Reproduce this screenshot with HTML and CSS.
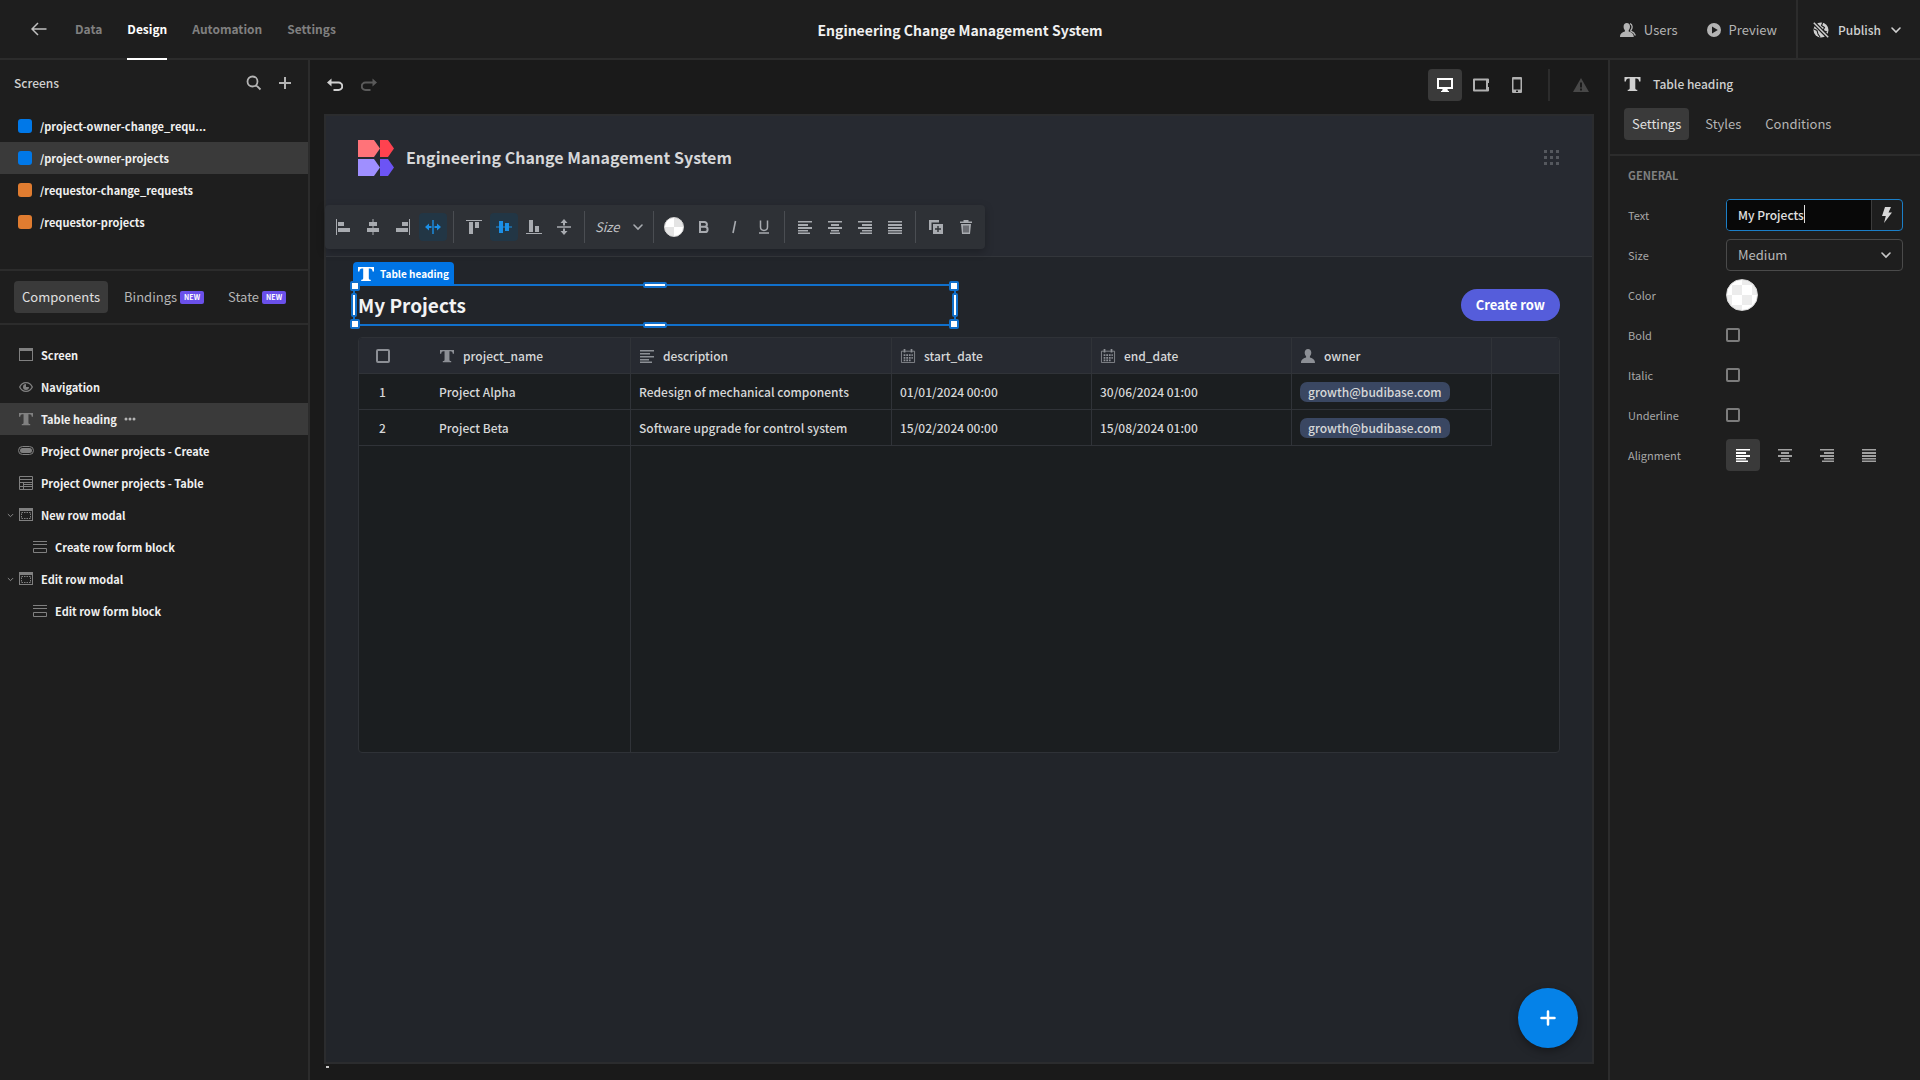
FILE: index.html
```html
<!DOCTYPE html>
<html lang="en">
<head>
  <meta charset="UTF-8" />
  <meta name="viewport" content="width=device-width, initial-scale=1" />
  <title>Engineering Change Management System</title>
  <link rel="stylesheet" href="styles.css">
</head>
<body>
  <svg class="sprite" aria-hidden="true">
    <symbol id="i-text" viewBox="0 0 16 16"><path d="M0 1h16v4.500h-1.400C14.300 3.400 13.600 2.600 12 2.600h-1.200V12c0 1.300.4 1.700 2 1.800V15H3.200v-1.200c1.600-.1 2-.5 2-1.800V2.600H4C2.400 2.600 1.700 3.400 1.400 5.500H0z"/></symbol>
    <symbol id="i-search" viewBox="0 0 16 16"><path d="M10.300 10.300 14.500 14.500M11.500 6.500a5 5 0 1 1-10 0 5 5 0 0 1 10 0z" fill="none" stroke="currentColor" stroke-width="1.800"/></symbol>
    <symbol id="i-plus" viewBox="0 0 14 14"><path d="M6 1h2v5h5v2H8v5H6V8H1V6h5z"/></symbol>
    <symbol id="i-chevron" viewBox="0 0 12 12"><path d="M2 4l4 4 4-4" fill="none" stroke="currentColor" stroke-width="1.600" stroke-linecap="round"/></symbol>
    <symbol id="i-undo" viewBox="0 0 16 14"><path d="M3 4.500h8.500a3.600 3.600 0 0 1 0 7.500H6.500" fill="none" stroke="currentColor" stroke-width="2"/><path d="M4.500 0.500v8L0 4.500z"/></symbol>
    <symbol id="i-window" viewBox="0 0 14 14"><path d="M0 0h14v13H0zM1 3v9h12V3z" fill-rule="evenodd"/></symbol>
    <symbol id="i-modal" viewBox="0 0 14 14"><path d="M0 0h14v13H0zM1 3v9h12V3z" fill-rule="evenodd"/><path d="M2.500 4.500h9v6h-9z" fill="none" stroke="currentColor" stroke-dasharray="1.500 1"/></symbol>
    <symbol id="i-eye" viewBox="0 0 14 14"><path d="M.7 7C2 4.200 4.200 2.700 7 2.700S12 4.200 13.300 7C12 9.800 9.800 11.300 7 11.300S2 9.800.7 7z" fill="none" stroke="currentColor" stroke-width="1.300"/><path d="M7 4v3h3a3 3 0 1 1-3-3z"/></symbol>
    <symbol id="i-button" viewBox="0 0 16 14"><rect x=".5" y="2.500" width="15" height="8" rx="4" fill="none" stroke="currentColor"/><rect x="2" y="4" width="12" height="5" rx="2.500"/></symbol>
    <symbol id="i-table" viewBox="0 0 14 14"><path d="M.5.5h13v13H.5zM.5 3.500h13M4.500 6v8M.5 6.500h13M4.500 8.500h9M.5 10.500h13" fill="none" stroke="currentColor"/></symbol>
    <symbol id="i-form" viewBox="0 0 14 14"><path d="M0 1.500h14M0 4.500h14M.5 8.500h13v4H.5z" fill="none" stroke="currentColor"/></symbol>
    <symbol id="i-al" viewBox="0 0 14 14"><path d="M0 1h14v1.500H0zM0 4h10v1.500H0zM0 7h14v1.500H0zM0 10h9v1.500H0zM0 12.500h12V14H0z"/></symbol>
    <symbol id="i-left" viewBox="0 0 14 14"><path d="M0 1h14v1.500H0zM0 4h10v2H0zM0 7h14v2H0zM0 10h10v1.500H0zM0 12.500h12V14H0z"/></symbol>
    <symbol id="i-center" viewBox="0 0 14 14"><path d="M0 1h14v1.500H0zM3 4h8v2H3zM0 7h14v2H0zM3 10h8v1.500H3zM2 12.500h10V14H2z"/></symbol>
    <symbol id="i-right" viewBox="0 0 14 14"><path d="M0 1h14v1.500H0zM4 4h10v2H4zM0 7h14v2H0zM4 10h10v1.500H4zM2 12.500h12V14H2z"/></symbol>
    <symbol id="i-just" viewBox="0 0 14 14"><path d="M0 1h14v1.500H0zM0 4h14v2H0zM0 7h14v2H0zM0 10h14v1.500H0zM0 12.500h14V14H0z"/></symbol>
    <symbol id="i-cal" viewBox="0 0 16 16"><path d="M.5 2.500h15v13H.5z" fill="none" stroke="currentColor"/><path d="M3 0h2v4H3zM11 0h2v4h-2zM3 6h2v2H3zM6 6h2v2H6zM9 6h2v2H9zM12 6h1.500v2H12zM3 9h2v2H3zM6 9h2v2H6zM9 9h2v2H9zM12 9h1.500v2H12zM3 12h2v2H3zM6 12h2v2H6zM9 12h2v2H9z"/></symbol>
    <symbol id="i-user" viewBox="0 0 14 14"><path d="M7 0c2 0 3.300 1.500 3.300 3.600 0 1.600-.6 2.900-1.400 3.700v1.300c2 .8 5.100 1.400 5.100 5.400H0c0-4 3.100-4.600 5.100-5.400V7.300C4.300 6.500 3.700 5.200 3.700 3.600 3.700 1.500 5 0 7 0z"/></symbol>
  </svg>

  <header class="topbar">
    <nav class="topnav">
      <a class="back" href="#" aria-label="Back"><svg width="16" height="14" viewBox="0 0 16 14"><path d="M15.500 7H1.500M7 1 1 7l6 6" fill="none" stroke="currentColor" stroke-width="1.500"/></svg></a>
      <a href="#">Data</a>
      <a class="active" href="#">Design</a>
      <a href="#">Automation</a>
      <a href="#">Settings</a>
    </nav>
    <h1>Engineering Change Management System</h1>
    <div class="actions">
      <button><svg width="16" height="14" viewBox="0 0 16 14"><path d="M6.800 0c2 0 3.200 1.500 3.200 3.500 0 1.600-.6 2.900-1.300 3.700v1.200c1.900.8 5.100 1.400 5.100 5.600H0c0-4.200 3-4.800 4.900-5.600V7.200C4.100 6.400 3.600 5.100 3.600 3.500 3.600 1.500 4.800 0 6.800 0z"/><path d="M10 .6c2.600.8 2.700 4.700.8 6.700v.8c1.700.6 3.600 1.600 4.600 4.400" fill="none" stroke="currentColor" stroke-width="1.300"/></svg>Users</button>
      <button class="preview"><svg width="14" height="14" viewBox="0 0 14 14"><path d="M7 0a7 7 0 1 1 0 14A7 7 0 0 1 7 0zM5 3.500v7L10.800 7z" fill-rule="evenodd"/></svg>Preview</button>
      <button class="publish"><svg width="16" height="16" viewBox="0 0 16 16"><circle cx="8" cy="8" r="7.500"/><path d="M10 0 8.500 3.500l3 2L10 8.500 14 10M1 7l3 1.500L5 12l2 3" fill="none" stroke="#1e1e1e" stroke-width="1.100"/><path d="M0 0 16 16" stroke="#1e1e1e" stroke-width="4"/><path d="M.8.800 15.200 15.200" stroke="currentColor" stroke-width="1.500"/></svg>Publish<svg width="12" height="12"><use href="#i-chevron"/></svg></button>
    </div>
  </header>

  <main class="workspace">
    <aside class="left-panel">
      <div class="panel-head">
        <h2>Screens</h2>
        <button aria-label="Search"><svg width="16" height="16"><use href="#i-search"/></svg></button>
        <button aria-label="Add screen"><svg width="14" height="14"><use href="#i-plus"/></svg></button>
      </div>
      <ul class="list screens">
        <li><span class="swatch blue"></span>/project-owner-change_requ&#46;&#46;&#46;</li>
        <li class="selected"><span class="swatch blue"></span>/project-owner-projects</li>
        <li><span class="swatch orange"></span>/requestor-change_requests</li>
        <li><span class="swatch orange"></span>/requestor-projects</li>
      </ul>
      <div class="tabs left-tabs">
        <button class="active">Components</button>
        <button>Bindings<span class="badge">NEW</span></button>
        <button>State<span class="badge">NEW</span></button>
      </div>
      <ul class="list components">
        <li><svg class="ico"><use href="#i-window"/></svg>Screen</li>
        <li><svg class="ico"><use href="#i-eye"/></svg>Navigation</li>
        <li class="selected"><svg class="ico"><use href="#i-text"/></svg>Table heading<button class="more" aria-label="More"><svg width="12" height="4" viewBox="0 0 12 4"><circle cx="2" cy="2" r="1.500"/><circle cx="6" cy="2" r="1.500"/><circle cx="10" cy="2" r="1.500"/></svg></button></li>
        <li><svg class="ico wide"><use href="#i-button"/></svg>Project Owner projects - Create</li>
        <li><svg class="ico"><use href="#i-table"/></svg>Project Owner projects - Table</li>
        <li class="open"><svg class="twisty"><use href="#i-chevron"/></svg><svg class="ico"><use href="#i-modal"/></svg>New row modal</li>
        <li class="child"><svg class="ico"><use href="#i-form"/></svg>Create row form block</li>
        <li class="open"><svg class="twisty"><use href="#i-chevron"/></svg><svg class="ico"><use href="#i-modal"/></svg>Edit row modal</li>
        <li class="child"><svg class="ico"><use href="#i-form"/></svg>Edit row form block</li>
      </ul>
    </aside>

    <section class="center">
      <div class="center-bar">
        <button class="history" aria-label="Undo"><svg width="16" height="14"><use href="#i-undo"/></svg></button>
        <button class="history redo" aria-label="Redo"><svg width="16" height="14"><use href="#i-undo"/></svg></button>
        <div class="devices">
          <button class="active" aria-label="Desktop"><svg width="16" height="16" viewBox="0 0 16 16"><path d="M0 1h16v11h-5.500c0 1.500.5 2 1.500 2v1H4v-1c1 0 1.500-.5 1.500-2H0zM2 3v7h12V3z" fill-rule="evenodd"/></svg></button>
          <button aria-label="Tablet"><svg width="16" height="14" viewBox="0 0 16 14"><path d="M1 .5h14a1 1 0 0 1 1 1V5h-1v4h1v3.500a1 1 0 0 1-1 1H1a1 1 0 0 1-1-1v-11a1 1 0 0 1 1-1zM2 2.500v9h11v-9z" fill-rule="evenodd"/></svg></button>
          <button aria-label="Mobile"><svg width="10" height="16" viewBox="0 0 10 16"><path d="M1 0h8a1 1 0 0 1 1 1v14a1 1 0 0 1-1 1H1a1 1 0 0 1-1-1V1a1 1 0 0 1 1-1zM1.500 2.500v10h7v-10zM4 13.500v1.500h2v-1.500z" fill-rule="evenodd"/></svg></button>
        </div>
        <svg class="warning" width="16" height="14" viewBox="0 0 16 14"><path d="M8 0l8 14H0zM7 4.500V9.500h2V4.500zM7 10.500v2h2v-2z" fill-rule="evenodd"/></svg>
      </div>

      <div class="frame">
        <div class="app-head">
          <svg width="36" height="36" viewBox="0 0 36 36"><path d="M0 0h16l6 8.500-6 8.500H0z" fill="#ff7379"/><path d="M22 0h8l6 8.500-6 8.500h-8z" fill="#ff424f"/><path d="M0 19h16l6 8.500-6 8.500H0z" fill="#9f8fff"/><path d="M22 19h8l6 8.500-6 8.500h-8z" fill="#6c54f5"/></svg>
          <h2>Engineering Change Management System</h2>
          <svg class="apps" width="16" height="16" viewBox="0 0 16 16"><path d="M0 0h3v3H0zM6 0h3v3H6zM12 0h3v3h-3zM0 6h3v3H0zM6 6h3v3H6zM12 6h3v3h-3zM0 12h3v3H0zM6 12h3v3H6zM12 12h3v3h-3z"/></svg>
        </div>

        <div class="toolbar">
          <button aria-label="Align left"><svg viewBox="0 0 16 16"><path d="M1 0h1v16H1zM3 3h6v4H3zM3 9h12v4H3z"/></svg></button>
          <button aria-label="Align center"><svg viewBox="0 0 16 16"><path d="M7.500 0h1v16h-1zM4 3h8v4H4zM2 9h12v4H2z"/></svg></button>
          <button aria-label="Align right"><svg viewBox="0 0 16 16"><path d="M14 0h1v16h-1zM7 3h6v4H7zM1 9h12v4H1z"/></svg></button>
          <button class="active" aria-label="Stretch horizontally"><svg viewBox="0 0 16 16"><path d="M7.300 1h1.400v14H7.300zM0 8l4-3.500V7h2.500v2H4v2.500zM16 8l-4-3.500V7H9.500v2H12v2.500z"/></svg></button>
          <hr>
          <button aria-label="Align top"><svg viewBox="0 0 16 16"><path d="M0 1h16v1H0zM3 3h4v12H3zM9 3h4v6H9z"/></svg></button>
          <button class="active" aria-label="Align middle"><svg viewBox="0 0 16 16"><path d="M0 7.500h16v1H0zM3 2h4v12H3zM9 4h4v8H9z"/></svg></button>
          <button aria-label="Align bottom"><svg viewBox="0 0 16 16"><path d="M0 14h16v1H0zM3 1h4v12H3zM9 7h4v6H9z"/></svg></button>
          <button aria-label="Stretch vertically"><svg viewBox="0 0 16 16"><path d="M1 7.300h14v1.400H1zM8 0l3.500 4H9v2.500H7V4H4.500zM8 16l3.500-4H9V9.500H7V12H4.500z"/></svg></button>
          <hr>
          <div class="size-pick">
            <select aria-label="Size"><option>Size</option></select>
            <svg width="12" height="12"><use href="#i-chevron"/></svg>
          </div>
          <hr>
          <button aria-label="Color"><span class="checker"></span></button>
          <button aria-label="Bold"><svg viewBox="0 0 16 16"><path d="M4 3h4.500a2.300 2.300 0 0 1 0 4.800H4zM4 7.800h5a2.600 2.600 0 0 1 0 5.200H4z" fill="none" stroke="currentColor" stroke-width="2"/></svg></button>
          <button aria-label="Italic"><svg viewBox="0 0 16 16"><path d="M9.500 2 7 14" stroke="currentColor" stroke-width="1.600"/></svg></button>
          <button aria-label="Underline"><svg viewBox="0 0 16 16"><path d="M4.500 1.500V8c0 4.500 7 4.500 7 0V1.500M3 14h10" fill="none" stroke="currentColor" stroke-width="1.500"/></svg></button>
          <hr>
          <button aria-label="Text left"><svg class="s14"><use href="#i-left"/></svg></button>
          <button aria-label="Text center"><svg class="s14"><use href="#i-center"/></svg></button>
          <button aria-label="Text right"><svg class="s14"><use href="#i-right"/></svg></button>
          <button aria-label="Justify"><svg class="s14"><use href="#i-just"/></svg></button>
          <hr>
          <button aria-label="Duplicate"><svg viewBox="0 0 16 16"><path d="M1 1h10v2.500H3.500V11H1zM5 5h10v10H5zM9.300 7v2.300H7v1.400h2.300V13h1.400v-2.300H13V9.300h-2.300V7z" fill-rule="evenodd"/></svg></button>
          <button aria-label="Delete"><svg viewBox="0 0 16 16"><path d="M5.500 1h5v1.500H14V4H2V2.500h3.500zM3 5h10l-1 10H4zM5.500 6.500v7h1v-7zM7.500 6.500v7h1v-7zM9.500 6.500v7h1v-7z" fill-rule="evenodd"/></svg></button>
        </div>

        <div class="app-body">
          <div class="title-row">
            <div class="heading">
              <h2>My Projects</h2>
              <div class="selection">
                <span class="tag"><svg width="16" height="16"><use href="#i-text"/></svg>Table heading</span>
                <i class="corner tl"></i><i class="corner tr"></i><i class="corner bl"></i><i class="corner br"></i>
                <i class="bar top"></i><i class="bar bottom"></i><i class="bar left"></i><i class="bar right"></i>
              </div>
            </div>
            <button class="create">Create row</button>
          </div>
          <div class="grid">
            <table>
              <colgroup><col class="c-num"><col class="c-std"><col class="c-desc"><col class="c-std"><col class="c-std"><col class="c-std"><col></colgroup>
              <thead>
                <tr>
                  <th class="num"><input type="checkbox" aria-label="Select all"></th>
                  <th><span><svg><use href="#i-text"/></svg>project_name</span></th>
                  <th><span><svg><use href="#i-al"/></svg>description</span></th>
                  <th><span><svg><use href="#i-cal"/></svg>start_date</span></th>
                  <th><span><svg><use href="#i-cal"/></svg>end_date</span></th>
                  <th><span><svg><use href="#i-user"/></svg>owner</span></th>
                  <th></th>
                </tr>
              </thead>
              <tbody>
                <tr><td class="num">1</td><td>Project Alpha</td><td>Redesign of mechanical components</td><td>01/01/2024 00:00</td><td>30/06/2024 01:00</td><td><span class="pill">growth@budibase.com</span></td><td class="blank"></td></tr>
                <tr><td class="num">2</td><td>Project Beta</td><td>Software upgrade for control system</td><td>15/02/2024 00:00</td><td>15/08/2024 01:00</td><td><span class="pill">growth@budibase.com</span></td><td class="blank"></td></tr>
                <tr class="rest"><td colspan="2"></td><td colspan="5" class="blank"></td></tr>
              </tbody>
            </table>
          </div>
        </div>
        <button class="fab" aria-label="Add component"><svg width="16" height="16" viewBox="0 0 16 16"><path d="M8 1.500v13M1.500 8h13" stroke="#fff" stroke-width="2.500" stroke-linecap="round"/></svg></button>
        <i class="speck"></i>
      </div>
    </section>

    <aside class="right-panel">
      <div class="right-head">
        <h2><svg width="17" height="16"><use href="#i-text"/></svg>Table heading</h2>
        <div class="tabs">
          <button class="active">Settings</button>
          <button>Styles</button>
          <button>Conditions</button>
        </div>
      </div>
      <form class="settings">
        <h3>GENERAL</h3>
        <div class="field">
          <label for="text">Text</label>
          <div class="text-box">
            <input type="text" id="text" value="My Projects">
            <i class="cursor"></i>
            <button type="button" aria-label="Bind"><svg width="10" height="16" viewBox="0 0 10 16"><path d="M3 0h6L6.500 5.500H10L2 16l1.800-7H0z"/></svg></button>
          </div>
        </div>
        <div class="field">
          <label for="size">Size</label>
          <div class="select-box">
            <select id="size"><option>Medium</option></select>
            <svg width="12" height="12"><use href="#i-chevron"/></svg>
          </div>
        </div>
        <div class="field">
          <label for="color">Color</label>
          <button type="button" id="color" class="color" aria-label="Color"><span class="checker"></span></button>
        </div>
        <div class="field"><label for="bold">Bold</label><input type="checkbox" id="bold"></div>
        <div class="field"><label for="italic">Italic</label><input type="checkbox" id="italic"></div>
        <div class="field"><label for="underline">Underline</label><input type="checkbox" id="underline"></div>
        <div class="field">
          <label for="align">Alignment</label>
          <div class="align">
            <button type="button" id="align" class="active" aria-label="Left"><svg><use href="#i-left"/></svg></button>
            <button type="button" aria-label="Center"><svg><use href="#i-center"/></svg></button>
            <button type="button" aria-label="Right"><svg><use href="#i-right"/></svg></button>
            <button type="button" aria-label="Justify"><svg><use href="#i-just"/></svg></button>
          </div>
        </div>
      </form>
    </aside>
  </main>
</body>
</html>
```
FILE: styles.css
```css
* { box-sizing: border-box; }
body {
  margin: 0; height: 100vh; display: flex; flex-direction: column; overflow: hidden;
  font-family: "Noto Sans CJK SC", "Noto Sans", sans-serif; font-size: 13px; line-height: 20px;
  background: #1e1e1e; color: #c8c8c8;
}
h1, h2, h3, ul { margin: 0; padding: 0; font-size: 12px; }
ul { list-style: none; }
a { color: inherit; text-decoration: none; }
svg { fill: currentColor; flex: none; display: block; }
button, input, select { font: inherit; color: inherit; }
button { display: flex; align-items: center; justify-content: center; padding: 0; border: none; background: none; cursor: pointer; }
select { appearance: none; border: none; background: none; }
.sprite { display: none; }
input[type="checkbox"] { appearance: none; width: 14px; height: 14px; margin: 0; border: 2px solid #7c7c7c; border-radius: 2px; }

/* top bar */
.topbar { display: grid; grid-template-columns: 1fr auto 1fr; height: 60px; border-bottom: 2px solid #2c2c2c; flex: none; }
.topnav { display: flex; gap: 25px; padding-left: 31px; color: #808080; font-size: 12px; font-weight: 600; }
.topnav a { display: flex; align-items: center; height: 60px; border-bottom: 2px solid transparent; }
.topnav .back { color: #c0c0c0; margin-right: 3px; }
.topnav .active { color: #fff; border-color: #fff; }
.topbar h1 { align-self: center; font-size: 14px; color: #f0f0f0; font-weight: 600; }
.actions { display: flex; justify-content: flex-end; }
.actions button { gap: 8px; color: #b4b4b4; }
.actions .preview { margin: 0 19px 0 29px; }
.actions .publish { gap: 9px; border-left: 2px solid #2c2c2c; padding: 0 18px 0 15px; color: #d0d0d0; font-size: 12px; font-weight: 500; }

/* layout */
.workspace { flex: 1; display: grid; grid-template-columns: 310px 1fr 312px; min-height: 0; }
.left-panel { border-right: 2px solid #2c2c2c; }
.right-panel { border-left: 2px solid #2c2c2c; }
.center { display: flex; flex-direction: column; background: #1a1a1a; padding: 0 14px 16px; min-width: 0; }

/* left panel */
.panel-head { display: flex; align-items: center; gap: 16px; height: 46px; padding: 0 16px 0 14px; color: #b4b4b4; }
.panel-head h2 { flex: 1; font-weight: 500; color: #d0d0d0; }
.list { font-size: 11px; font-weight: 600; color: #f0f0f0; }
.list li { display: flex; align-items: center; height: 32px; }
.list .selected { background: #3a3a3a; }
.screens { padding: 4px 0 31px; }
.screens li { gap: 8px; padding-left: 18px; }
.swatch { width: 14px; height: 14px; border-radius: 3px; }
.blue { background: #0078e8; }
.orange { background: #e07c30; }
.tabs { display: flex; gap: 8px; }
.tabs button { height: 32px; padding: 0 8px; border-radius: 4px; color: #b4b4b4; }
.tabs .active { background: #3a3a3a; color: #e0e0e0; }
.left-tabs { border: solid #2c2c2c; border-width: 2px 0; padding: 10px 14px; }
.badge { margin-left: 3px; padding: 0 4px; height: 13px; border-radius: 2px; background: #6a50ea; color: #fff; font-size: 7px; font-weight: 700; line-height: 13px; }
.components { padding-top: 14px; }
.components li { padding-left: 19px; }
.components .open { padding-left: 7px; }
.components .child { padding-left: 33px; }
.ico { width: 14px; height: 14px; margin-right: 8px; color: #808080; }
.wide { width: 16px; margin: 0 7px 0 -1px; }
.twisty { width: 7px; height: 7px; margin-right: 5px; color: #909090; }
.more { margin-left: 7px; color: #b4b4b4; }

/* center */
.center-bar { display: flex; align-items: center; height: 54px; padding: 0 5px 4px 3px; flex: none; }
.history { margin-right: 18px; color: #d0d0d0; }
.redo { color: #5a5a5a; transform: scaleX(-1); }
.devices { display: flex; gap: 2px; margin-left: auto; padding-right: 14px; border-right: 2px solid #2c2c2c; color: #b0b0b0; }
.devices button { width: 34px; height: 32px; border-radius: 4px; }
.devices .active { background: #3a3a3a; color: #fff; }
.warning { margin: 0 0 0 23px; color: #484848; }
.frame { position: relative; flex: 1; display: flex; flex-direction: column; border: 2px solid #2b2c2e; background: #22252a; }
.app-head { display: flex; align-items: flex-start; height: 141px; padding: 24px 32px; background: #272a31; border-bottom: 1px solid #33363b; }
.app-head h2 { flex: 1; margin-left: 12px; font-size: 16px; line-height: 34px; font-weight: 600; color: #d6d7d9; }
.apps { align-self: flex-start; margin: 10px 0; color: #55585e; }

.toolbar {
  position: absolute; left: -1px; top: 89px; display: flex; align-items: center; gap: 2px;
  height: 44px; padding: 0 5px 0 4px; border-radius: 4px; background: #2e3136; color: #a8abb0;
  box-shadow: 0 3px 8px rgba(0, 0, 0, 0.25);
}
.toolbar button { width: 28px; height: 28px; border-radius: 4px; }
.toolbar button svg { width: 16px; height: 16px; }
.toolbar button .s14 { width: 14px; height: 14px; }
.toolbar .active { background: #223645; color: #1b8fe6; }
.toolbar hr { width: 1px; height: 32px; margin: 0 4px; border: none; background: #4a4d52; }
.size-pick { position: relative; }
.size-pick select { width: 56px; padding: 0 4px; font-style: italic; color: #c0c2c5; }
.size-pick svg, .select-box svg { position: absolute; right: 3px; top: 4px; pointer-events: none; }
.checker {
  width: 20px; height: 20px; border-radius: 50%; border: 1px solid #d8d8d8;
  background: conic-gradient(#e4e4e4 25%, #fff 0 50%, #e4e4e4 0 75%, #fff 0);
}

.app-body { padding: 27px 32px; }
.title-row { display: flex; align-items: center; justify-content: space-between; height: 42px; }
.heading { position: relative; width: 598px; }
.heading h2 { font-size: 19px; line-height: 42px; font-weight: 600; color: #f2f3f4; }
.selection { position: absolute; inset: 0 0 0 -5px; border: 2px solid #1070cc; }
.tag {
  position: absolute; left: -2px; bottom: 38px; display: flex; align-items: center; gap: 6px; height: 24px; padding: 0 5px;
  border-radius: 4px 4px 0 0; background: #0074e4; color: #fff; font-size: 10px; font-weight: 700; white-space: nowrap;
}
.corner { position: absolute; width: 10px; height: 10px; background: #fff; border: 2px solid #1070cc; border-radius: 2px; }
.tl, .tr { top: -5px; }
.bl, .br { bottom: -5px; }
.tl, .bl { left: -5px; }
.tr, .br { right: -5px; }
.bar { position: absolute; background: #fff; border: 2px solid #1070cc; border-radius: 2px; }
.top, .bottom { width: 24px; height: 6px; left: calc(50% - 12px); }
.left, .right { width: 6px; height: 24px; top: calc(50% - 12px); }
.top { top: -4px; }
.bottom { bottom: -4px; }
.left { left: -4px; }
.right { right: -4px; }
.create { height: 32px; padding: 0 15px; border-radius: 16px; background: #555ddb; color: #fff; font-weight: 700; }

.grid { margin-top: 11px; border: 1px solid #2f3237; border-radius: 4px; overflow: hidden; background: #1b1e20; }
table { width: 100%; height: 414px; table-layout: fixed; border-collapse: separate; border-spacing: 0; font-size: 12px; }
.c-num { width: 72px; }
.c-std { width: 200px; }
.c-desc { width: 261px; }
th, td { height: 36px; padding: 0 8px; border: solid #303338; border-width: 0 1px 1px 0; text-align: left; font-weight: 500; color: #d6d7d8; white-space: nowrap; }
th { background: #272a31; }
th span { display: flex; align-items: center; gap: 8px; }
th svg { width: 16px; height: 14px; color: #8c8f95; }
th:last-child { border-right: none; }
.num { padding: 0 17px; border-right: none; }
td.num { padding-left: 20px; }
th.num input { display: block; border-color: #8c8f95; }
.blank { border: none; }
.rest td { height: auto; border-bottom: none; }
.pill { display: inline-block; height: 20px; padding: 0 8px; border-radius: 7px; background: #3a4762; }
.fab { position: absolute; right: 14px; bottom: 14px; width: 60px; height: 60px; border-radius: 50%; background: #0582e8; box-shadow: 0 3px 8px rgba(0, 0, 0, 0.35); }
.speck { position: absolute; left: 0; bottom: -6px; width: 3px; height: 2px; background: #c8c8c8; }

/* right panel */
.right-head { padding: 14px 14px; border-bottom: 2px solid #2c2c2c; }
.right-head h2 { display: flex; align-items: center; gap: 12px; margin-bottom: 14px; font-weight: 500; color: #d0d0d0; }
.settings { padding: 10px 17px 10px 18px; }
.settings h3 { font-size: 11px; line-height: 18px; font-weight: 600; color: #808080; margin-bottom: 11px; }
.field { display: grid; grid-template-columns: 98px 1fr; align-items: center; height: 40px; }
.field label { font-size: 11px; color: #a8a8a8; }
.text-box { position: relative; display: flex; height: 32px; border: 1px solid #1b7fc8; border-radius: 4px; overflow: hidden; }
.text-box input { flex: 1; min-width: 0; padding: 0 11px; border: none; outline: none; background: #080808; color: #e0e0e0; font-size: 12px; font-weight: 500; }
.text-box button { width: 31px; border-left: 1px solid #3c3c3c; color: #d8d8d8; }
.cursor { position: absolute; left: 77px; top: 5px; width: 1px; height: 18px; background: #e0e0e0; }
.select-box { position: relative; }
.select-box select { width: 100%; height: 32px; padding: 0 11px; border: 1px solid #4a4a4a; border-radius: 4px; color: #b8b8b8; }
.select-box svg { right: 11px; top: 10px; }
.color .checker { width: 32px; height: 32px; background: repeating-conic-gradient(#fff 0 25%, #ececec 0 50%) 5px 5px / 20px 20px; }
.color { justify-self: start; }
.align { display: flex; gap: 8px; }
.align button { width: 34px; height: 32px; border-radius: 4px; color: #a0a0a0; }
.align .active { background: #3a3a3a; color: #fff; }
.align svg { width: 14px; height: 14px; }
```
